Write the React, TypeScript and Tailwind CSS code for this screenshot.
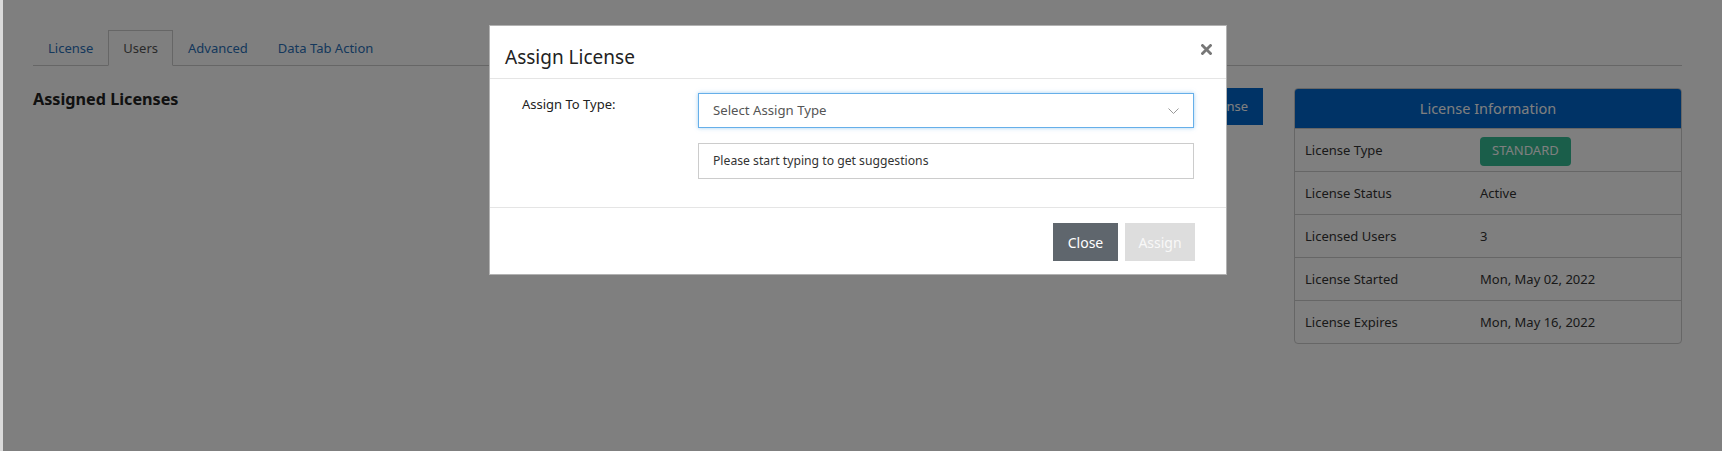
import { ReactNode } from "react";

const font = { fontFamily: '"Noto Sans", "Open Sans", sans-serif' };

const tabs = ["License", "Users", "Advanced", "Data Tab Action"];

const licenseInfo: { label: string; value: ReactNode }[] = [
  {
    label: "License Type",
    value: (
      <span className="inline-flex h-[29px] items-center rounded-[4px] bg-[#34bc94] px-[12px] text-[13px] text-white">
        STANDARD
      </span>
    ),
  },
  { label: "License Status", value: "Active" },
  { label: "Licensed Users", value: "3" },
  { label: "License Started", value: "Mon, May 02, 2022" },
  { label: "License Expires", value: "Mon, May 16, 2022" },
];

function Tabs() {
  return (
    <div className="flex h-[36px] border-b border-[#cccccc]">
      {tabs.map((t) => (
        <div
          key={t}
          className={
            t === "Users"
              ? "-mb-px flex items-center border border-b-white border-[#cccccc] bg-white px-[14px] pt-[2px] text-[13px] text-[#555555]"
              : "flex items-center border border-transparent px-[14px] pt-[2px] text-[13px] text-[#2a70b8]"
          }
        >
          {t}
        </div>
      ))}
    </div>
  );
}

function InfoPanel() {
  return (
    <div className="w-[388px] shrink-0 overflow-hidden rounded-[4px] border border-[#cccccc]">
      <div className="flex h-[39px] items-center justify-center bg-[#0066cc] text-[14.5px] text-white">
        License Information
      </div>
      {licenseInfo.map((row) => (
        <div key={row.label} className="flex h-[43px] items-center border-t border-[#cccccc] pt-[2px] text-[13px] text-[#333333]">
          <div className="w-[174px] pl-[10px]">{row.label}</div>
          <div className="pl-[11px]">{row.value}</div>
        </div>
      ))}
    </div>
  );
}

function CloseIcon() {
  return (
    <svg width="11" height="11" viewBox="0 0 11 11">
      <path d="M1.5 1.5 L9.5 9.5 M9.5 1.5 L1.5 9.5" stroke="#777777" strokeWidth="2.8" strokeLinecap="square" />
    </svg>
  );
}

function Chevron() {
  return (
    <svg width="11" height="6" viewBox="0 0 11 6" fill="none">
      <path d="M0.5 0.5 L5.5 5.5 L10.5 0.5" stroke="#999999" strokeWidth="1" />
    </svg>
  );
}

function AssignModal() {
  return (
    <div className="absolute left-[486px] top-[25px] w-[738px] border border-black/30 bg-white">
      <div className="flex h-[53px] items-start justify-between border-b border-[#e5e5e5] pl-[15px] pr-[14px]">
        <h4 className="pt-[19px] text-[19px] leading-[24px] text-[#222222]">Assign License</h4>
        <div className="pt-[18px]">
          <CloseIcon />
        </div>
      </div>
      <div className="flex pb-[28px] pl-[32px] pr-[32px] pt-[14px]">
        <div className="w-[176px] pt-[2px] text-[13px] text-[#222222]">Assign To Type:</div>
        <div className="flex flex-1 flex-col gap-[15px]">
          <div className="flex h-[35px] items-center justify-between border border-[#66afe9] pl-[14px] pr-[14px] text-[13.2px] text-[#555555] shadow-[0_0_4px_rgba(102,175,233,0.6)]">
            <span>Select Assign Type</span>
            <Chevron />
          </div>
          <div className="flex h-[36px] items-center border border-[#cccccc] pl-[14px] text-[12.2px] text-[#333333]">
            Please start typing to get suggestions
          </div>
        </div>
      </div>
      <div className="flex justify-end gap-[7px] border-t border-[#e5e5e5] pb-[13px] pr-[31px] pt-[15px]">
        <button className="h-[38px] w-[65px] bg-[#5f666d] text-[14px] text-white">Close</button>
        <button className="h-[38px] w-[70px] bg-[#dddddd] text-[14px] text-[#f8f8f8]">Assign</button>
      </div>
    </div>
  );
}

export default function App() {
  return (
    <div className="flex h-[451px] w-full overflow-hidden bg-white" style={font}>
      <div className="w-[3px] shrink-0 bg-[#dadada]" />
      <div className="relative flex-1">
        <div className="pl-[30px] pr-[40px] pt-[30px]">
          <Tabs />
          <div className="mt-[22px] flex gap-[31px]">
            <div className="flex flex-1 items-start justify-between">
              <h3 className="mt-[-1px] text-[16.2px] font-bold text-[#222222]">Assigned Licenses</h3>
              <button className="h-[37px] bg-[#0066cc] px-[15px] text-[13px] text-white">Assign License</button>
            </div>
            <InfoPanel />
          </div>
        </div>
        <div className="absolute inset-0 bg-black/50" />
        <AssignModal />
      </div>
    </div>
  );
}
